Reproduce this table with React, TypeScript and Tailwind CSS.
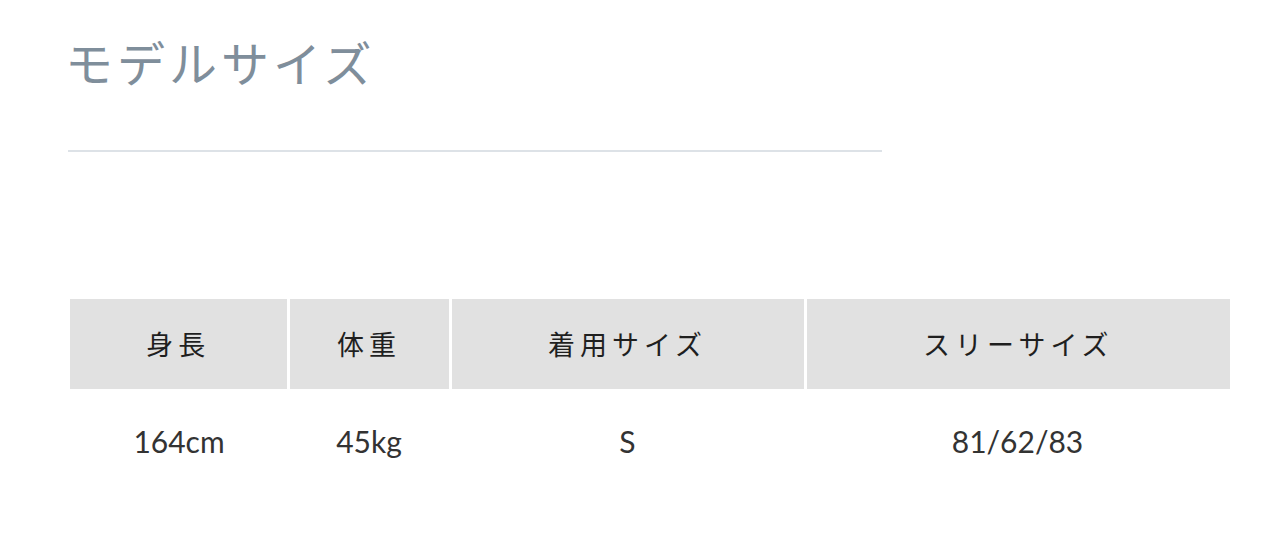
const cols = [
  { label: "身長", value: "164cm", w: "w-[218px]" },
  { label: "体重", value: "45kg", w: "w-[162px]" },
  { label: "着用サイズ", value: "S", w: "w-[355px]" },
  { label: "スリーサイズ", value: "81/62/83", w: "w-[425px]" },
];

export default function App() {
  return (
    <div className="min-h-screen bg-white font-['Noto_Sans','Noto_Sans_CJK_JP',sans-serif]">
      <div className="pl-[65px] pt-[31px]">
        {/* Heading */}
        <h2 className="text-[48px] leading-[60px] tracking-[4px] font-normal text-[#7f8e9b] font-['Noto_Sans_CJK_JP',sans-serif]">
          モデルサイズ
        </h2>
        <div className="mt-[59px] ml-[3px] w-[814px] h-[2px] bg-[#dde2e7]" />

        {/* Size table */}
        <table className="mt-[147px] ml-[5px] border-collapse">
          <thead>
            <tr>
              {cols.map((c, i) => (
                <th
                  key={c.label}
                  className={`${c.w} h-[90px] bg-[#e1e1e1] text-[27px] tracking-[5px] font-normal text-[#1f1f1f] font-['Noto_Sans_CJK_JP',sans-serif] ${
                    i > 0 ? "border-l-[3px] border-white" : ""
                  }`}
                >
                  {c.label}
                </th>
              ))}
            </tr>
          </thead>
          <tbody>
            <tr>
              {cols.map((c) => (
                <td
                  key={c.label}
                  className="h-[104px] text-center text-[30px] text-[#333] font-['Lato','Noto_Sans_CJK_JP',sans-serif]"
                >
                  {c.value}
                </td>
              ))}
            </tr>
          </tbody>
        </table>
      </div>
    </div>
  );
}
